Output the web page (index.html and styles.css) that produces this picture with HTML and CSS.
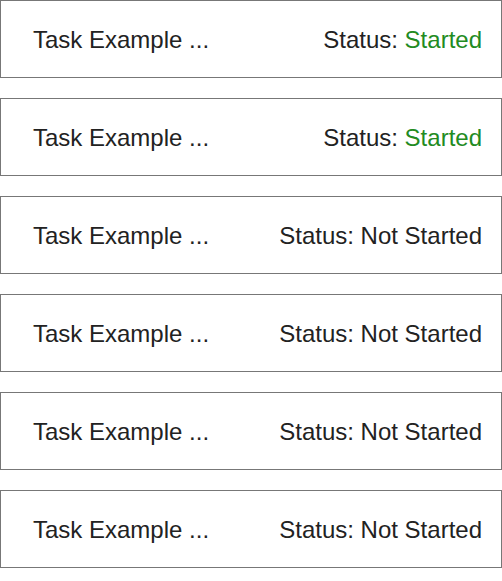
FILE: index.html
```html
<!DOCTYPE html>
<html>
<head>
<meta charset="utf-8">
<link rel="stylesheet" href="styles.css">
</head>
<body>
<div class="list">
  <div class="card"><span class="title">Task Example ...</span><span class="status">Status: <span class="started">Started</span></span></div>
  <div class="card"><span class="title">Task Example ...</span><span class="status">Status: <span class="started">Started</span></span></div>
  <div class="card"><span class="title">Task Example ...</span><span class="status">Status: Not Started</span></div>
  <div class="card"><span class="title">Task Example ...</span><span class="status">Status: Not Started</span></div>
  <div class="card"><span class="title">Task Example ...</span><span class="status">Status: Not Started</span></div>
  <div class="card"><span class="title">Task Example ...</span><span class="status">Status: Not Started</span></div>
</div>
</body>
</html>
```
FILE: styles.css
```css
html, body {
  margin: 0;
  padding: 0;
  background: #fff;
}
body {
  font-family: "Liberation Sans", Arial, sans-serif;
  font-size: 24px;
  color: #222;
}
.list {
  display: flex;
  flex-direction: column;
  gap: 20px;
}
.card {
  height: 78px;
  box-sizing: border-box;
  border: 1px solid #777;
  display: flex;
  align-items: center;
  justify-content: space-between;
  padding: 2px 19px 0 32px;
}
.started {
  color: #228b22;
}
```
